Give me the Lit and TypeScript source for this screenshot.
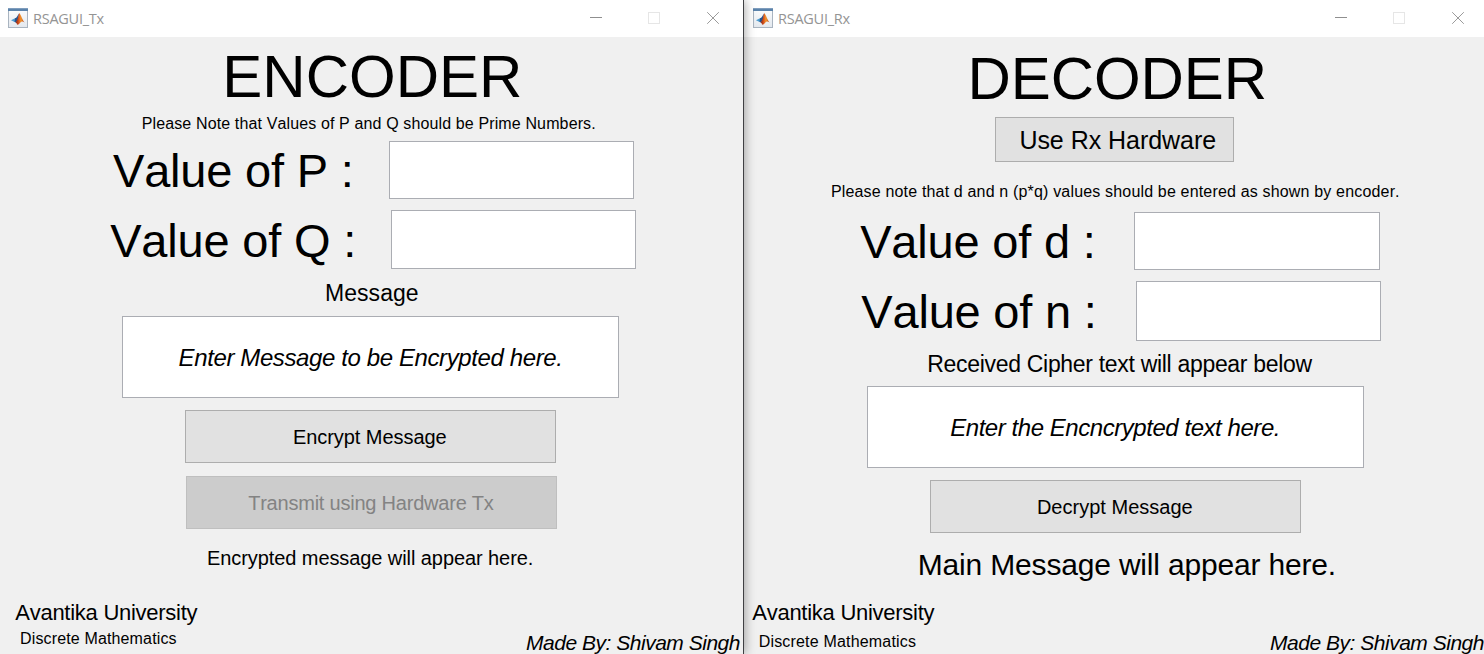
import { LitElement, html, svg, css } from "lit";
import { customElement, property } from "lit/decorators.js";

/* Title bar shared by both figure windows */
@customElement("title-bar")
class TitleBar extends LitElement {
  @property() label = "";

  static styles = css`
    :host {
      display: flex;
      align-items: flex-start;
      height: 37px;
      box-sizing: border-box;
      padding-top: 8px;
    }
    .logo {
      flex: none;
      width: 20px;
      height: 20px;
    }
    .label {
      flex: 1;
      padding-left: 5px;
      font: 14.5px/21px "Open Sans", sans-serif;
      letter-spacing: -0.26px;
      color: #949494;
      white-space: nowrap;
    }
    .controls {
      flex: none;
      display: flex;
      gap: 46px;
      padding-top: 4px;
    }
    .controls svg {
      display: block;
      width: 12px;
      height: 12px;
    }
    .controls svg + svg + svg {
      margin-left: 1px;
    }
  `;

  render() {
    return html`
      <svg class="logo" viewBox="0 0 20 20">
        <defs>
          <linearGradient id="frame" x1="0" y1="0" x2="0" y2="1">
            <stop offset="0" stop-color="#fcfdfe" />
            <stop offset="1" stop-color="#e3e8ee" />
          </linearGradient>
          <linearGradient id="peak" x1="0" y1="0" x2="1" y2="0">
            <stop offset="0" stop-color="#7a1e14" />
            <stop offset="0.35" stop-color="#d9541e" />
            <stop offset="0.6" stop-color="#f39a2d" />
            <stop offset="1" stop-color="#b5300f" />
          </linearGradient>
        </defs>
        <rect x="0.5" y="0.5" width="19" height="19" fill="url(#frame)" stroke="#a9b4c0" />
        <rect x="0" y="0" width="20" height="3" fill="#5b83ab" />
        <rect x="0" y="0" width="20" height="1" fill="#7f9dbd" />
        <path d="M3 12.2 L7 10.3 L8.7 12 L6.6 14Z" fill="#4b9bd0" />
        <path d="M7 10.3 C8.8 9.8 9.6 7.4 11 5.4 L10.4 11 L8 14.6 L6.6 14Z" fill="#27528c" />
        <path d="M11.2 5 C12.7 6.3 13.8 10.8 16.6 14.6 C14.7 13.2 13.4 13.2 12.2 14.8 C11 16.4 9.9 17 9 16.6 C8.9 15.3 8.4 14.8 7.6 14.4 C9.6 12.6 10.4 7.6 11.2 5Z" fill="url(#peak)" />
      </svg>
      <span class="label">${this.label}</span>
      <div class="controls">
        <svg viewBox="0 0 12 12">${svg`<rect x="0" y="5" width="12" height="1" fill="#8f8f8f" />`}</svg>
        <svg viewBox="0 0 12 12">${svg`<rect x="0.5" y="0.5" width="11" height="11" fill="none" stroke="#e6e6e6" />`}</svg>
        <svg viewBox="0 0 12 12">${svg`<path d="M0.2 0.2 L11.8 11.8 M11.8 0.2 L0.2 11.8" stroke="#8f8f8f" stroke-width="0.9" />`}</svg>
      </div>
    `;
  }
}

const panelStyles = css`
  :host {
    display: block;
    height: 654px;
    overflow: hidden;
    background: #f0f0f0;
    color: #000;
    font-family: "Liberation Sans", Arial, sans-serif;
    font-kerning: none;
    white-space: nowrap;
  }
  * {
    box-sizing: border-box;
  }
  title-bar {
    background: #fff;
  }
  .heading {
    height: 60px;
    font-size: 60px;
    line-height: 61px;
  }
  .note {
    height: 20px;
    font-size: 16px;
    line-height: 22px;
  }
  .field {
    display: flex;
  }
  .caption {
    flex: none;
    font-size: 47px;
    letter-spacing: -0.2px;
    line-height: 58px;
    padding-top: 1px;
  }
  .input,
  .area {
    background: #fff;
    border: 1px solid #abadb3;
  }
  .area {
    width: 497px;
    height: 82px;
    font-size: 24px;
    font-style: italic;
    line-height: 81px;
  }
  .button {
    width: 371px;
    height: 53px;
    background: #e1e1e1;
    border: 1px solid #adadad;
    font-size: 20px;
    line-height: 53px;
  }
  .disabled {
    background: #ccc;
    border-color: #bfbfbf;
    color: #838383;
  }
  .subhead {
    height: 26px;
    font-size: 23px;
    line-height: 26px;
  }
  .footer {
    display: flex;
    justify-content: space-between;
  }
  .university {
    font-size: 22px;
    line-height: 26px;
    letter-spacing: -0.267px;
  }
  .subject {
    font-size: 16px;
    line-height: 20px;
  }
  .author {
    padding-top: 30px;
    font-size: 21px;
    line-height: 26px;
    font-style: italic;
    letter-spacing: -0.487px;
  }
`;

@customElement("encoder-window")
class EncoderWindow extends LitElement {
  static styles = [
    panelStyles,
    css`
      title-bar { padding-left: 8px; padding-right: 24px; }
      .heading { margin-top: 9px; padding-left: 222.3px; letter-spacing: 0; }
      .note { margin-top: 7px; padding-left: 141.7px; letter-spacing: 0.13px; }
      .p { margin-top: 8px; height: 58px; }
      .p .caption { width: 389px; padding-left: 113px; }
      .p .input { width: 245px; }
      .q { margin-top: 11px; height: 59px; }
      .q .caption { width: 391px; padding-left: 110.2px; padding-top: 2px; }
      .q .input { width: 245px; }
      .subhead { margin-top: 11px; padding-left: 325px; letter-spacing: 0.044px; }
      .area { margin: 10px 0 0 122px; padding-left: 55.6px; letter-spacing: -0.39px; }
      .encrypt { margin: 12px 0 0 185px; padding-left: 106.9px; letter-spacing: -0.05px; }
      .transmit { margin: 13px 0 0 186px; padding-left: 61.2px; letter-spacing: -0.22px; }
      .result { margin-top: 16px; padding-left: 207px; font-size: 20px; line-height: 26px; letter-spacing: -0.08px; }
      .footer { margin-top: 29px; padding-left: 15.3px; padding-right: 3px; }
      .subject { margin-top: 3px; padding-left: 4.7px; letter-spacing: 0.146px; }
    `,
  ];

  render() {
    return html`
      <title-bar label="RSAGUI_Tx"></title-bar>
      <div class="heading">ENCODER</div>
      <div class="note">Please Note that Values of P and Q should be Prime Numbers.</div>
      <div class="field p"><div class="caption">Value of P :</div><div class="input"></div></div>
      <div class="field q"><div class="caption">Value of Q :</div><div class="input"></div></div>
      <div class="subhead">Message</div>
      <div class="area">Enter Message to be Encrypted here.</div>
      <div class="button encrypt">Encrypt Message</div>
      <div class="button transmit disabled">Transmit using Hardware Tx</div>
      <div class="result">Encrypted message will appear here.</div>
      <div class="footer">
        <div>
          <div class="university">Avantika University</div>
          <div class="subject">Discrete Mathematics</div>
        </div>
        <div class="author">Made By: Shivam Singh</div>
      </div>
    `;
  }
}

@customElement("decoder-window")
class DecoderWindow extends LitElement {
  static styles = [
    panelStyles,
    css`
      title-bar { padding-left: 9px; padding-right: 20px; }
      .heading { margin-top: 11px; padding-left: 223.6px; letter-spacing: -0.08px; }
      .hardware { width: 239px; height: 45px; margin: 9px 0 0 251px; padding-left: 23.4px; font-size: 25px; line-height: 44px; letter-spacing: -0.041px; }
      .note { margin-top: 19px; padding-left: 86.9px; letter-spacing: 0.17px; }
      .d { margin-top: 11px; height: 58px; }
      .d .caption { width: 390px; padding-left: 116.2px; }
      .d .input { width: 246px; }
      .n { margin-top: 11px; height: 60px; }
      .n .caption { width: 392px; padding-left: 117.3px; padding-top: 2px; }
      .n .input { width: 245px; }
      .subhead { margin-top: 10px; padding-left: 183.3px; letter-spacing: -0.31px; }
      .area { margin: 9px 0 0 123px; padding-left: 82.2px; letter-spacing: -0.449px; }
      .decrypt { margin: 12px 0 0 186px; padding-left: 105.9px; letter-spacing: 0.015px; }
      .result { margin-top: 14px; padding-left: 173.8px; font-size: 30px; line-height: 36px; letter-spacing: -0.18px; }
      .footer { margin-top: 17px; padding-left: 8.3px; }
      .subject { margin-top: 6px; padding-left: 6.4px; letter-spacing: 0.18px; }
    `,
  ];

  render() {
    return html`
      <title-bar label="RSAGUI_Rx"></title-bar>
      <div class="heading">DECODER</div>
      <div class="button hardware">Use Rx Hardware</div>
      <div class="note">Please note that d and n (p*q) values should be entered as shown by encoder.</div>
      <div class="field d"><div class="caption">Value of d :</div><div class="input"></div></div>
      <div class="field n"><div class="caption">Value of n :</div><div class="input"></div></div>
      <div class="subhead">Received Cipher text will appear below</div>
      <div class="area">Enter the Encncrypted text here.</div>
      <div class="button decrypt">Decrypt Message</div>
      <div class="result">Main Message will appear here.</div>
      <div class="footer">
        <div>
          <div class="university">Avantika University</div>
          <div class="subject">Discrete Mathematics</div>
        </div>
        <div class="author">Made By: Shivam Singh</div>
      </div>
    `;
  }
}

@customElement("app-root")
class AppRoot extends LitElement {
  static styles = css`
    :host {
      display: grid;
      grid-template-columns: 744px 740px;
      width: 1484px;
      height: 654px;
      overflow: hidden;
    }
    /* The encoder window is in front and casts a shadow on the decoder window */
    encoder-window {
      position: relative;
      z-index: 1;
      border-right: 1px solid #3f4043;
      box-shadow: 1px 0 10px rgba(0, 0, 0, 0.34);
    }
  `;

  render() {
    return html`
      <encoder-window></encoder-window>
      <decoder-window></decoder-window>
    `;
  }
}
